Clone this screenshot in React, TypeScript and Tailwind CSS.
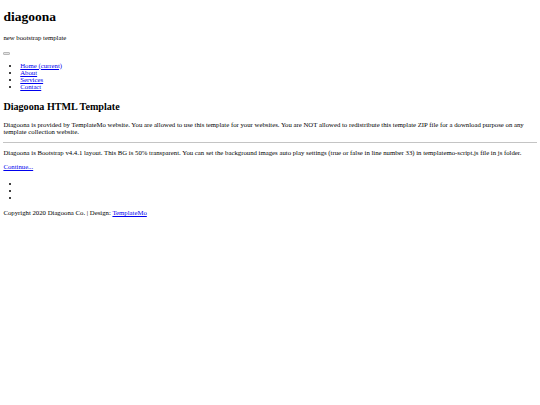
export default function App() {
  return (
    <div className="font-['Liberation_Serif',serif] text-[6.75px] leading-[normal] text-black bg-white min-h-[405px] px-[3.375px] pb-[3.375px] flow-root">
      <header>
        <h1 className="text-[13.5px] font-bold my-[9.045px]">diagoona</h1>
        <p className="my-[6.75px]">new bootstrap template</p>
      </header>

      <nav>
        <button className="inline-block align-baseline w-[6.75px] h-[2.5px] rounded-[1px] bg-[#e4e4e4] border-[0.4px] border-[#b8b8b8]"></button>
        <ul className="list-disc pl-[16.875px] my-[6.75px]">
          <li><a href="#" className="text-[#0000ee] underline">Home (current)</a></li>
          <li><a href="#" className="text-[#0000ee] underline">About</a></li>
          <li><a href="#" className="text-[#0000ee] underline">Services</a></li>
          <li><a href="#" className="text-[#0000ee] underline">Contact</a></li>
        </ul>
      </nav>

      <main>
        <h2 className="text-[10.125px] font-bold mt-[11.8px] mb-[8.4px]">Diagoona HTML Template</h2>
        <p className="my-[6.75px]">
          Diagoona is provided by TemplateMo website. You are allowed to use this template for your websites. You are NOT allowed to redistribute this template ZIP file for a download purpose on any template collection website.
        </p>
        <hr className="h-0 border-0 border-t-[1px] border-[#c4c4c4] my-[3.375px]" />
        <p className="my-[6.75px]">
          Diagoona is Bootstrap v4.4.1 layout. This BG is 50% transparent. You can set the background images auto play settings (true or false in line number 33) in templatemo-script.js file in js folder.
        </p>
        <p className="my-[6.75px]">
          <a href="#" className="text-[#0000ee] underline">Continue...</a>
        </p>
        <ul className="list-disc pl-[16.875px] mt-[10px] mb-[6.75px]">
          <li>{'\u00a0'}</li>
          <li>{'\u00a0'}</li>
          <li>{'\u00a0'}</li>
        </ul>
      </main>

      <footer>
        <p className="mt-[8px] mb-[6.75px]">
          Copyright 2020 Diagoona Co. | Design: <a href="#" className="text-[#0000ee] underline">TemplateMo</a>
        </p>
      </footer>
    </div>
  )
}
